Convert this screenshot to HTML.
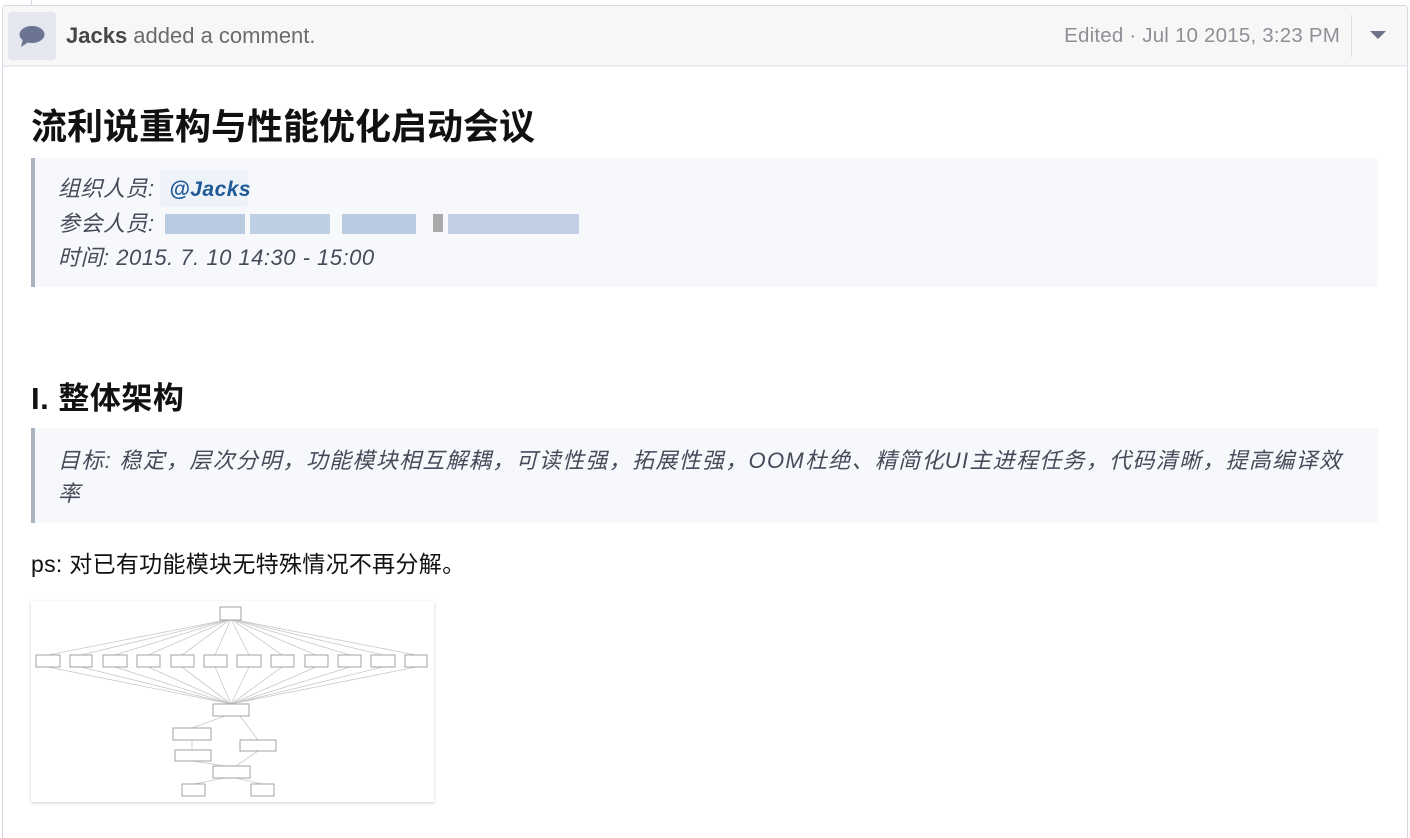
<!DOCTYPE html>
<html style="width:1410px;height:838px;overflow:hidden"><head><meta charset="utf-8"><style>
*{margin:0;padding:0;box-sizing:border-box}
body{width:1410px;height:838px;background:#fff;position:relative;overflow:hidden;font-family:"Liberation Sans","Noto Sans CJK SC",sans-serif;color:#111}
.abs{position:absolute}
.card{left:2px;top:5px;width:1406px;height:833px;border:1px solid #d6d7e3;border-bottom:none;border-radius:3px 3px 0 0}
.hdr{left:3px;top:6px;width:1404px;height:61px;background:#f7f7f7;border-bottom:2px solid #ececf1}
.ico{left:8px;top:12px;width:48px;height:48px;background:#e5e7ef;border-radius:4px}
.ht{left:66px;top:22px;font-size:22px;line-height:28px;color:#6b6b6b;white-space:nowrap}
.ht b{color:#474747}
.date{right:70px;top:22px;font-size:20.5px;line-height:28px;color:#8e9098;white-space:nowrap;letter-spacing:0.2px}
.q{background:#f7f8fc;border-left:4px solid #a9b4c0;left:31px;width:1347px}
.qt{font-style:italic;color:#464b5a;font-size:22px;white-space:nowrap}
</style></head><body>
<div class="abs" style="left:31px;top:0;width:1px;height:5px;background:#d6d7e3"></div>
<div class="abs card"></div>
<div class="abs hdr"></div>
<div class="abs ico"><svg width="48" height="48" viewBox="0 0 48 48"><ellipse cx="24" cy="22.5" rx="12.5" ry="8.5" fill="#6b7591"/><path d="M15 27 L13 35 L22 29 Z" fill="#6b7591"/></svg></div>
<div class="abs ht"><b>Jacks</b> added a comment.</div>
<div class="abs date">Edited · Jul 10 2015, 3:23 PM</div>
<div class="abs" style="left:1351px;top:15px;width:1px;height:42px;background:#d8dde6"></div>
<svg class="abs" style="left:1368px;top:30px" width="20" height="10"><path d="M2 1 L18 1 L10 9 Z" fill="#6b7289"/></svg>

<div class="abs" style="left:31px;top:104px;font-size:36px;font-weight:bold;line-height:46px;white-space:nowrap">流利说重构与性能优化启动会议</div>

<div class="abs q" style="top:158px;height:129px"></div>
<div class="abs" style="left:160px;top:170px;width:88px;height:37px;background:#eef3fa;border-radius:3px"></div>
<div class="abs qt" style="left:58px;top:172px;line-height:34px;letter-spacing:0.5px">组织人员: <span style="color:#1f5a96;font-weight:bold;margin-left:8px;font-size:21px">@Jacks</span><br>参会人员:<br>时间: 2015. 7. 10 14:30 - 15:00</div>
<div class="abs" style="left:165px;top:214px;width:80px;height:20px;background:#a9bfd9;opacity:.8"></div>
<div class="abs" style="left:250px;top:214px;width:80px;height:20px;background:#b0c4dc;opacity:.8"></div>
<div class="abs" style="left:342px;top:214px;width:74px;height:20px;background:#a9bfd9;opacity:.8"></div>
<div class="abs" style="left:448px;top:214px;width:131px;height:20px;background:#b3c6dd;opacity:.8"></div>
<div class="abs" style="left:433px;top:214px;width:10px;height:18px;background:#aaa"></div>

<div class="abs" style="left:31px;top:379px;font-size:31px;font-weight:bold;line-height:40px;white-space:nowrap;letter-spacing:0.5px">I. 整体架构</div>

<div class="abs q" style="top:428px;height:95px"></div>
<div class="abs qt" style="left:58px;top:444px;line-height:33px;letter-spacing:1.3px">目标: 稳定，层次分明，功能模块相互解耦，可读性强，拓展性强，OOM杜绝、精简化UI主进程任务，代码清晰，提高编译效<br>率</div>

<div class="abs" style="left:31px;top:549px;font-size:23px;line-height:30px;white-space:nowrap;letter-spacing:0.3px">ps: 对已有功能模块无特殊情况不再分解。</div>

<svg class="abs" style="left:31px;top:601px;box-shadow:0 1px 3px rgba(0,0,0,.2)" width="403" height="201" viewBox="31 601 403 201">
<rect x="31" y="601" width="403" height="201" fill="#fff"/>
<g stroke="#c8c8c8" stroke-width="0.8" fill="none">
<path d="M231 619 L48 655 M231 619 L81 655 M231 619 L115 655 M231 619 L148 655 M231 619 L182 655 M231 619 L215 655 M231 619 L249 655 M231 619 L282 655 M231 619 L316 655 M231 619 L350 655 M231 619 L383 655 M231 619 L416 655"/>
<path d="M48 667 L231 704 M81 667 L231 704 M115 667 L231 704 M148 667 L231 704 M182 667 L231 704 M215 667 L231 704 M249 667 L231 704 M282 667 L231 704 M316 667 L231 704 M350 667 L231 704 M383 667 L231 704 M416 667 L231 704"/>
<path d="M225 716 L192 728 M192 740 L192 750 M240 716 L258 740 M192 761 L225 766 M258 751 L236 766 M225 778 L194 784 M236 778 L262 784"/>
</g>
<g stroke="#999" stroke-width="0.9" fill="#fff">
<rect x="220" y="607" width="21" height="13"/>
<rect x="36" y="655" width="24" height="12"/><rect x="70" y="655" width="22" height="12"/><rect x="103" y="655" width="24" height="12"/><rect x="137" y="655" width="23" height="12"/><rect x="171" y="655" width="23" height="12"/><rect x="204" y="655" width="23" height="12"/><rect x="237" y="655" width="24" height="12"/><rect x="271" y="655" width="23" height="12"/><rect x="305" y="655" width="23" height="12"/><rect x="338" y="655" width="23" height="12"/><rect x="371" y="655" width="24" height="12"/><rect x="405" y="655" width="22" height="12"/>
<rect x="213" y="704" width="36" height="12"/>
<rect x="173" y="728" width="38" height="12"/><rect x="175" y="750" width="36" height="11"/><rect x="240" y="740" width="36" height="11"/>
<rect x="213" y="766" width="37" height="12"/>
<rect x="182" y="784" width="23" height="12"/><rect x="251" y="784" width="23" height="12"/>
</g>
</svg>
</body></html>
